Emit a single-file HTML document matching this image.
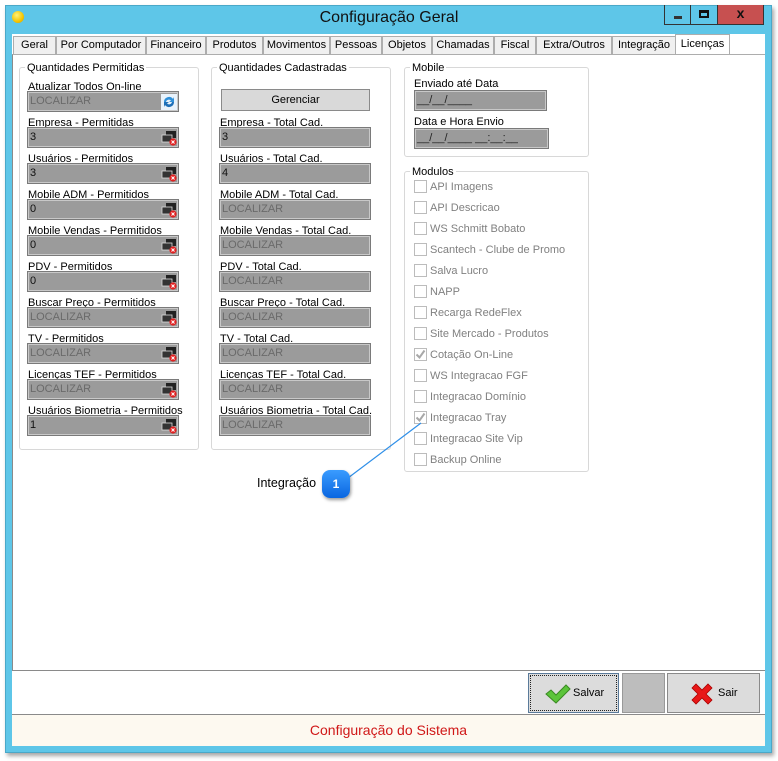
<!DOCTYPE html>
<html><head><meta charset="utf-8"><style>
*{box-sizing:border-box;margin:0;padding:0}
body{width:778px;height:761px;background:#fff;position:relative;overflow:hidden;font-family:"Liberation Sans",sans-serif;font-size:11px;color:#000}
.a{position:absolute}
.win{left:5px;top:5px;width:767px;height:748px;background:#5ec6e8;border:1px solid #4aa8c8;box-shadow:2px 3px 4px rgba(0,0,0,.35)}
.client{left:12px;top:34px;width:753px;height:712px;background:#fff}
.tab{position:absolute;top:36px;height:19px;border:1px solid #adadad;background:#f0f0f0;font-size:11px;text-align:center;line-height:17px;white-space:nowrap}
.grp{position:absolute;border:1px solid #d8d8d8;border-radius:3px}
.gt{position:absolute;background:#fff;padding:0 2px;font-size:11px;line-height:12px}
.lbl{position:absolute;font-size:11px;line-height:13px;white-space:nowrap}
.fld{position:absolute;height:21px;background:#9b9b9b;border:1px solid #7a7a7a;box-shadow:inset 0 0 0 1px #c8c8c8;font-size:11px;line-height:19px;padding-left:2px;color:#444}
.fld.g{color:#6a6a6a}
.ico{position:absolute;right:1px;top:2px;width:16px;height:16px}
.cb{position:absolute;width:13px;height:13px;border:1px solid #bcbcbc;background:#fff}
.cl{position:absolute;color:#808080;font-size:11px;line-height:13px;white-space:nowrap}
.btn{position:absolute;border:1px solid #8a8a8a;background:#dcdcdc;font-size:11px}
</style></head><body>
<div class="a win"></div>
<div class="a" style="left:12px;top:11px;width:12px;height:12px;border-radius:50%;background:radial-gradient(circle at 40% 35%,#fff27a,#f5c400 60%,#d09a00)"></div>
<div class="a" style="left:0;top:9px;width:778px;text-align:center;font-size:16px;color:#111">Configuração Geral</div>
<div class="a" style="left:664px;top:5px;width:27px;height:20px;border:1px solid #333;border-top:none"><div class="a" style="left:9px;top:11px;width:8px;height:3px;background:#333"></div></div>
<div class="a" style="left:691px;top:5px;width:27px;height:20px;border:1px solid #333;border-top:none;border-left:none"><div class="a" style="left:8px;top:5px;width:10px;height:8px;border:2px solid #111;border-top-width:3px"></div></div>
<div class="a" style="left:718px;top:5px;width:46px;height:20px;background:#c75050;border:1px solid #333;border-top:none;border-left:none;color:#111;font-weight:bold;text-align:center;font-size:14px;line-height:17px">x</div>
<div class="a client"></div>
<div class="tab" style="left:13px;width:43px">Geral</div>
<div class="tab" style="left:56px;width:90px">Por Computador</div>
<div class="tab" style="left:146px;width:60px">Financeiro</div>
<div class="tab" style="left:206px;width:57px">Produtos</div>
<div class="tab" style="left:263px;width:67px">Movimentos</div>
<div class="tab" style="left:330px;width:52px">Pessoas</div>
<div class="tab" style="left:382px;width:50px">Objetos</div>
<div class="tab" style="left:432px;width:62px">Chamadas</div>
<div class="tab" style="left:494px;width:42px">Fiscal</div>
<div class="tab" style="left:536px;width:76px">Extra/Outros</div>
<div class="tab" style="left:612px;width:64px">Integração</div>
<div class="tab" style="left:675px;top:34px;height:21px;width:55px;background:#fff;border-bottom:none;line-height:18px">Licenças</div>
<div class="a" style="left:12px;top:54px;width:753px;height:617px;border:1px solid #8a8a8a;border-right:none;border-top:1px solid #adadad;background:#fff"></div>
<div class="a" style="left:12px;top:714px;width:753px;height:32px;background:#fdf9f0;border-top:1px solid #8a8a8a"></div>
<div class="a" style="left:12px;top:722px;width:753px;text-align:center;color:#d01818;font-size:14px">Configuração do Sistema</div>

<div class="grp" style="left:19px;top:67px;width:180px;height:383px"></div>
<div class="gt" style="left:25px;top:62px">Quantidades Permitidas</div>
<div class="grp" style="left:211px;top:67px;width:180px;height:383px"></div>
<div class="gt" style="left:217px;top:62px">Quantidades Cadastradas</div>
<div class="lbl" style="left:28px;top:81px">Atualizar Todos On-line</div>
<div class="fld g" style="left:27px;top:91px;width:152px">LOCALIZAR<svg class="ico" viewBox="0 0 16 16"><rect x="0" y="0" width="16" height="16" fill="#e8f2fb"/><path d="M3 8a5 5 0 0 1 9-3l1-2v5h-5l2-1.5A3 3 0 0 0 5 8z" fill="#2f8fd8"/><path d="M13 8a5 5 0 0 1-9 3l-1 2V8h5l-2 1.5A3 3 0 0 0 11 8z" fill="#1d6fb8"/></svg></div>
<div class="btn" style="left:221px;top:89px;width:149px;height:22px;text-align:center;line-height:20px;background:#d9d9d9">Gerenciar</div>
<div id="rows"></div>

<div class="grp" style="left:404px;top:67px;width:185px;height:90px"></div>
<div class="gt" style="left:410px;top:62px">Mobile</div>
<div class="lbl" style="left:414px;top:78px">Enviado até Data</div>
<div class="fld" style="left:414px;top:90px;width:133px;color:#222">__/__/____</div>
<div class="lbl" style="left:414px;top:116px">Data e Hora Envio</div>
<div class="fld" style="left:414px;top:128px;width:135px;color:#222">__/__/____ __:__:__</div>
<div class="grp" style="left:404px;top:171px;width:185px;height:301px"></div>
<div class="gt" style="left:410px;top:166px">Modulos</div>

<svg class="a" style="left:0;top:0" width="778" height="761"><line x1="340" y1="484" x2="421" y2="423" stroke="#2f8fe8" stroke-width="1.2"/></svg>
<div class="lbl" style="left:257px;top:477px;font-size:12.5px">Integração</div>
<div class="a" style="left:322px;top:470px;width:28px;height:28px;border-radius:8px;background:linear-gradient(#3a9cff,#0a66e0);box-shadow:1px 2px 3px rgba(0,0,0,.4);color:#fff;font-weight:bold;text-align:center;line-height:28px;font-size:12px">1</div>

<div class="btn" style="left:528px;top:673px;width:91px;height:40px;border-color:#5a7a9a;outline:1px dotted #222;outline-offset:-3px">
<svg class="a" style="left:16px;top:10px" width="26" height="20" viewBox="0 0 26 20"><path d="M1 10l5-4 5 5L21 1l4 4L11 19z" fill="#5cc43a" stroke="#3a8a22" stroke-width="1"/></svg>
<span class="a" style="left:44px;top:13px">Salvar</span></div>
<div class="a" style="left:622px;top:673px;width:43px;height:40px;background:#bdbdbd;border:1px solid #999"></div>
<div class="btn" style="left:667px;top:673px;width:93px;height:40px">
<svg class="a" style="left:22px;top:9px" width="24" height="22" viewBox="0 0 24 22"><path d="M2 5l4-4 6 6 6-6 4 4-6 6 6 6-4 4-6-6-6 6-4-4 6-6z" fill="#e81818" stroke="#a00" stroke-width=".8"/></svg>
<span class="a" style="left:50px;top:13px">Sair</span></div>

<script>
var L=[["Empresa - Permitidas","3","Empresa - Total Cad.","3"],["Usuários - Permitidos","3","Usuários - Total Cad.","4"],["Mobile ADM - Permitidos","0","Mobile ADM - Total Cad.",""],["Mobile Vendas - Permitidos","0","Mobile Vendas - Total Cad.",""],["PDV - Permitidos","0","PDV - Total Cad.",""],["Buscar Preço -  Permitidos","","Buscar Preço -  Total Cad.",""],["TV -  Permitidos","","TV -  Total Cad.",""],["Licenças TEF -  Permitidos","","Licenças TEF -  Total Cad.",""],["Usuários Biometria - Permitidos","1","Usuários Biometria - Total Cad.",""]];
var ic='<svg class="ico" viewBox="0 0 16 16"><rect x="5" y="1" width="10" height="7" fill="#222"/><rect x="1" y="5" width="10" height="7" fill="#333" stroke="#ddd" stroke-width=".8"/><circle cx="12" cy="12" r="3.6" fill="#e02020"/><path d="M10.5 10.5l3 3M13.5 10.5l-3 3" stroke="#fff" stroke-width="1"/></svg>';
var h="";
L.forEach(function(r,i){var y=117+i*36;
h+='<div class="lbl" style="left:28px;top:'+y+'px">'+r[0]+'</div>';
h+='<div class="fld'+(r[1]?'':' g')+'" style="left:27px;top:'+(y+10)+'px;width:152px;'+(r[1]?'color:#111':'')+'">'+(r[1]||'LOCALIZAR')+ic+'</div>';
h+='<div class="lbl" style="left:220px;top:'+y+'px">'+r[2]+'</div>';
h+='<div class="fld'+(r[3]?'':' g')+'" style="left:219px;top:'+(y+10)+'px;width:152px;'+(r[3]?'color:#111':'')+'">'+(r[3]||'LOCALIZAR')+'</div>';});
var M=["API Imagens","API Descricao","WS Schmitt Bobato","Scantech - Clube de Promo","Salva Lucro","NAPP","Recarga RedeFlex","Site Mercado - Produtos","Cotação On-Line","WS Integracao FGF","Integracao Domínio","Integracao Tray","Integracao Site Vip","Backup Online"];
M.forEach(function(m,i){var y=180+i*21;var c=(i==8||i==11);
h+='<div class="cb" style="left:414px;top:'+y+'px">'+(c?'<svg width="11" height="11" viewBox="0 0 11 11" style="position:absolute;left:0;top:0"><path d="M1.5 5.5l3 3 5-7" stroke="#a8a8a8" stroke-width="2" fill="none"/></svg>':'')+'</div>';
h+='<div class="cl" style="left:430px;top:'+(y+1)+'px">'+m+'</div>';});
document.getElementById("rows").outerHTML=h;
</script>
</body></html>
